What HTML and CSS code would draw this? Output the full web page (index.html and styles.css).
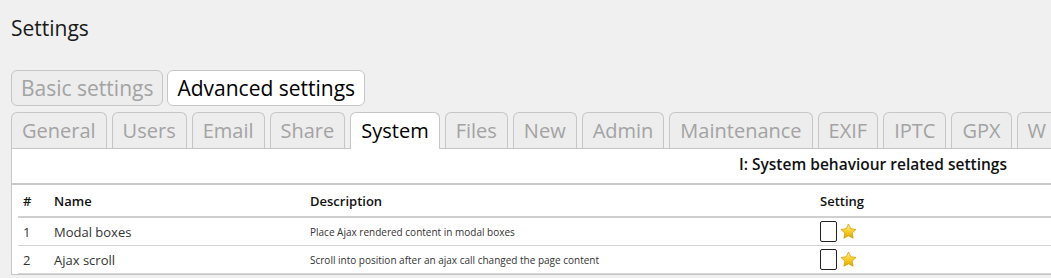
FILE: index.html
```html
<!DOCTYPE html>
<html lang="en">
<head>
  <meta charset="UTF-8" />
  <title>Settings</title>
  <link rel="stylesheet" href="styles.css">
</head>
<body>

  <h1 class="page-title">Settings</h1>

  <div class="main-tabs">
    <span class="main-tab">Basic settings</span>
    <span class="main-tab active">Advanced settings</span>
  </div>

  <div class="sub-tabs">
    <span class="sub-tab">General</span>
    <span class="sub-tab">Users</span>
    <span class="sub-tab">Email</span>
    <span class="sub-tab">Share</span>
    <span class="sub-tab active">System</span>
    <span class="sub-tab">Files</span>
    <span class="sub-tab">New</span>
    <span class="sub-tab">Admin</span>
    <span class="sub-tab">Maintenance</span>
    <span class="sub-tab">EXIF</span>
    <span class="sub-tab">IPTC</span>
    <span class="sub-tab">GPX</span>
    <span class="sub-tab">W</span>
  </div>

  <div class="panel">
    <div class="panel-title">I: System behaviour related settings</div>
    <table class="settings">
      <thead>
        <tr>
          <th class="col-nr">#</th>
          <th class="col-name">Name</th>
          <th class="col-desc">Description</th>
          <th>Setting</th>
        </tr>
      </thead>
      <tbody>
        <tr>
          <td>1</td>
          <td>Modal boxes</td>
          <td class="desc">Place Ajax rendered content in modal boxes</td>
          <td><span class="check"></span><svg class="star" viewBox="0 0 20 20"><defs><linearGradient id="sg" x1="0" y1="0" x2="0" y2="1"><stop offset="0" stop-color="#fff2a8"/><stop offset="0.5" stop-color="#f7cf2a"/><stop offset="1" stop-color="#e0a800"/></linearGradient></defs><path d="M10 1.2l2.7 5.6 6.1.8-4.5 4.2 1.1 6.1L10 15l-5.4 2.9 1.1-6.1L1.2 7.6l6.1-.8z" fill="url(#sg)" stroke="#d19a00" stroke-width="0.9" stroke-linejoin="round"/></svg></td>
        </tr>
        <tr>
          <td>2</td>
          <td>Ajax scroll</td>
          <td class="desc">Scroll into position after an ajax call changed the page content</td>
          <td><span class="check"></span><svg class="star" viewBox="0 0 20 20"><path d="M10 1.2l2.7 5.6 6.1.8-4.5 4.2 1.1 6.1L10 15l-5.4 2.9 1.1-6.1L1.2 7.6l6.1-.8z" fill="url(#sg)" stroke="#d19a00" stroke-width="0.9" stroke-linejoin="round"/></svg></td>
        </tr>
      </tbody>
    </table>
  </div>

</body>
</html>
```

FILE: styles.css
```css
:root {
  --bg-color: #f0f0f0;
  --tab-bg: #ededed;
  --border: #c6c6c6;
  --muted: #a3a3a3;
  --text-color: #1a1a1a;
}

body {
  font-family: 'Open Sans', 'Noto Sans', sans-serif;
  background-color: var(--bg-color);
  color: var(--text-color);
  margin: 0;
  padding: 0 0 0 11px;
  overflow: hidden;
}

.page-title {
  margin: 13px 0 0;
  font-size: 21px;
  font-weight: normal;
  line-height: 30px;
}

.main-tabs {
  display: flex;
  gap: 4px;
  margin-top: 27px;
}

.main-tab {
  height: 34px;
  line-height: 34px;
  padding: 0 9px;
  border: 1px solid var(--border);
  border-radius: 6px;
  background-color: var(--tab-bg);
  color: var(--muted);
  font-size: 21px;
}

.main-tab.active {
  background-color: #fff;
  color: #000;
}

.sub-tabs {
  display: flex;
  gap: 5px;
  margin-top: 6px;
  white-space: nowrap;
}

.sub-tab {
  height: 35px;
  line-height: 35px;
  padding: 0 10px;
  border: 1px solid var(--border);
  border-bottom: none;
  border-radius: 6px 6px 0 0;
  background-color: var(--tab-bg);
  color: var(--muted);
  font-size: 20px;
}

.sub-tab:last-child {
  padding-right: 30px;
}

.sub-tab.active {
  background-color: #fff;
  color: #000;
  height: 36px;
  margin-bottom: -1px;
  position: relative;
}

.panel {
  width: 1100px;
  background-color: #fff;
  border: 1px solid var(--border);
  border-right: none;
}

.panel-title {
  text-align: right;
  padding: 4px 105px 0 0;
  height: 30px;
  font-size: 15.5px;
  font-weight: 600;
  color: #111;
  border-bottom: 2px solid #c9c9c9;
}

.settings {
  border-collapse: collapse;
  margin: 0 0 0 6px;
  width: 1080px;
}

.settings th,
.settings td {
  text-align: left;
  padding: 0 0 0 5px;
  height: 27px;
  border-bottom: 1px solid #d4d4d4;
  font-size: 13px;
  color: #333;
}

.settings th {
  height: 31px;
  font-weight: 600;
  color: #111;
  border-bottom: 2px solid #cfcfcf;
}

.settings .col-nr { width: 26px; }
.settings .col-name { width: 251px; }
.settings .col-desc { width: 505px; }

.settings td.desc {
  font-size: 10px;
}

.check {
  display: inline-block;
  box-sizing: border-box;
  width: 17px;
  height: 21px;
  border: 1.5px solid #222;
  border-radius: 2px;
  vertical-align: middle;
}

.star {
  width: 17px;
  height: 17px;
  margin-left: 3px;
  vertical-align: middle;
}
```
